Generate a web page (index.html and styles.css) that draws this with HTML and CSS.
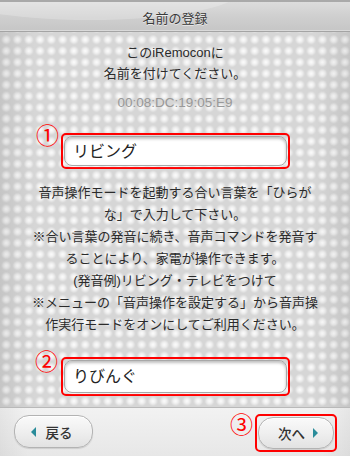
FILE: index.html
```html
<!DOCTYPE html>
<html lang="ja">
<head>
<meta charset="utf-8">
<title>名前の登録</title>
<link rel="stylesheet" href="styles.css">
</head>
<body>
<div class="screen">
  <header class="titlebar"><span class="title">名前の登録</span></header>
  <main class="content">
    <p class="intro">このiRemoconに<br>名前を付けてください。</p>
    <p class="mac">00:08:DC:19:05:E9</p>
    <div class="hl field">
      <span class="num">①</span>
      <div class="input">リビング</div>
    </div>
    <p class="desc">音声操作モードを起動する合い言葉を「ひらが<br>な」で入力して下さい。<br>※合い言葉の発音に続き、音声コマンドを発音す<br>ることにより、家電が操作できます。<br>(発音例)リビング・テレビをつけて<br>※メニューの「音声操作を設定する」から音声操<br>作実行モードをオンにしてご利用ください。</p>
    <div class="hl field field2">
      <span class="num">②</span>
      <div class="input">りびんぐ</div>
    </div>
  </main>
  <footer class="footer">
    <button class="btn back"><span class="tri tri-left"></span>戻る</button>
    <div class="hl next-wrap">
      <span class="num num3">③</span>
      <button class="btn next">次へ<span class="tri tri-right"></span></button>
    </div>
  </footer>
</div>
</body>
</html>
```

FILE: styles.css
```css
html, body {
  margin: 0;
  padding: 0;
}
body {
  width: 350px;
  height: 456px;
  overflow: hidden;
  font-family: "Liberation Sans", "Noto Sans CJK JP", sans-serif;
  color: #2b2b2b;
}
.screen {
  width: 350px;
  height: 456px;
  display: flex;
  flex-direction: column;
}
.titlebar {
  position: relative;
  height: 29px;
  border-top: 2px solid #a9a9a9;
  border-bottom: 1px solid #a4a4a4;
  background: linear-gradient(#dcdcdc, #cfcfcf 50%, #c6c6c6);
  display: flex;
  align-items: center;
  justify-content: center;
  overflow: hidden;
}
.titlebar::before {
  content: "";
  position: absolute;
  left: -60px;
  top: -40px;
  width: 300px;
  height: 58px;
  border-radius: 50%;
  background: rgba(255,255,255,0.22);
}
.titlebar::after {
  content: "";
  position: absolute;
  left: 0;
  right: 0;
  bottom: 0;
  height: 1px;
  background: rgba(255,255,255,0.35);
}
.title {
  position: relative;
  font-size: 13px;
  color: #3a3a3a;
  text-shadow: 0 1px 0 rgba(255,255,255,0.6);
  margin-top: 1px;
}
.content {
  flex: 1;
  display: flex;
  flex-direction: column;
  align-items: center;
  background-color: #d6d6d6;
  background-image:
    linear-gradient(to right, rgba(0,0,0,0.08), rgba(0,0,0,0) 10%, rgba(0,0,0,0) 90%, rgba(0,0,0,0.08)),
    radial-gradient(circle at center, rgba(255,255,255,0.95) 0, rgba(255,255,255,0.6) 2.5px, rgba(255,255,255,0) 5px);
  background-size: 100% 100%, 11.3px 11.3px;
  background-position: 0 0, 0.5px 2px;
}
.intro {
  margin: 10px 0 0;
  font-size: 13px;
  line-height: 21px;
  text-align: center;
}
.mac {
  margin: 8px 0 0;
  font-size: 13.5px;
  line-height: 21px;
  color: #999;
}
.hl {
  position: relative;
  border: 2px solid #f00;
  border-radius: 5px;
  padding: 1px;
}
.field {
  width: 223px;
  margin: 20px 0 0 1px;
}
.num {
  position: absolute;
  font-family: "Noto Sans CJK JP", sans-serif;
  font-size: 23px;
  line-height: 23px;
  width: 23px;
  text-align: center;
  color: #f00;
  left: -27px;
  top: -12px;
}
.input {
  height: 28px;
  border: 1px solid #a8a8a8;
  border-radius: 8px;
  background: #fff;
  box-shadow: inset 0 2px 3px rgba(0,0,0,0.25), 0 1px 1px rgba(255,255,255,0.6);
  font-size: 16px;
  line-height: 29px;
  padding-left: 8px;
  color: #222;
}
.field2 {
  margin-top: 21px;
  height: 33px;
}
.field2 .input {
  height: 31px;
  line-height: 32px;
}
.field2 .num {
  left: -28px;
  top: -10px;
}
.desc {
  margin: 13px 0 0;
  font-size: 13px;
  line-height: 22px;
  text-align: center;
  white-space: nowrap;
}
.footer {
  height: 48px;
  border-top: 1px solid #b9b9b9;
  background: linear-gradient(to right, rgba(0,0,0,0.05), rgba(0,0,0,0) 8%, rgba(0,0,0,0) 92%, rgba(0,0,0,0.05)),
              linear-gradient(#f2f2f2, #e7e7e7);
  display: flex;
  justify-content: space-between;
  align-items: flex-start;
  padding: 0 13px 0 14px;
}
.btn {
  font-family: "Liberation Sans", "Noto Sans CJK JP", sans-serif;
  font-size: 13.5px;
  font-weight: 500;
  color: #333;
  border: 1px solid #b3b3b3;
  border-radius: 15px;
  background: linear-gradient(#fafafa, #efefef 50%, #e2e2e2);
  box-shadow: 0 1px 1px rgba(0,0,0,0.12), inset 0 1px 0 #fff;
  display: flex;
  align-items: center;
  justify-content: center;
  padding: 0;
  margin: 0;
}
.back {
  width: 79px;
  height: 33px;
  margin-top: 7px;
  gap: 10px;
  padding-right: 4px;
}
.next-wrap {
  margin-top: 6px;
  width: 76px;
  height: 32px;
}
.next {
  width: 76px;
  height: 32px;
  gap: 8px;
  padding-left: 4px;
}
.num3 {
  left: -27px;
  top: -4px;
}
.tri {
  width: 0;
  height: 0;
  border-top: 5px solid transparent;
  border-bottom: 5px solid transparent;
}
.tri-left {
  border-right: 5px solid #2a8c9a;
}
.tri-right {
  border-left: 5px solid #2a8c9a;
}
```
